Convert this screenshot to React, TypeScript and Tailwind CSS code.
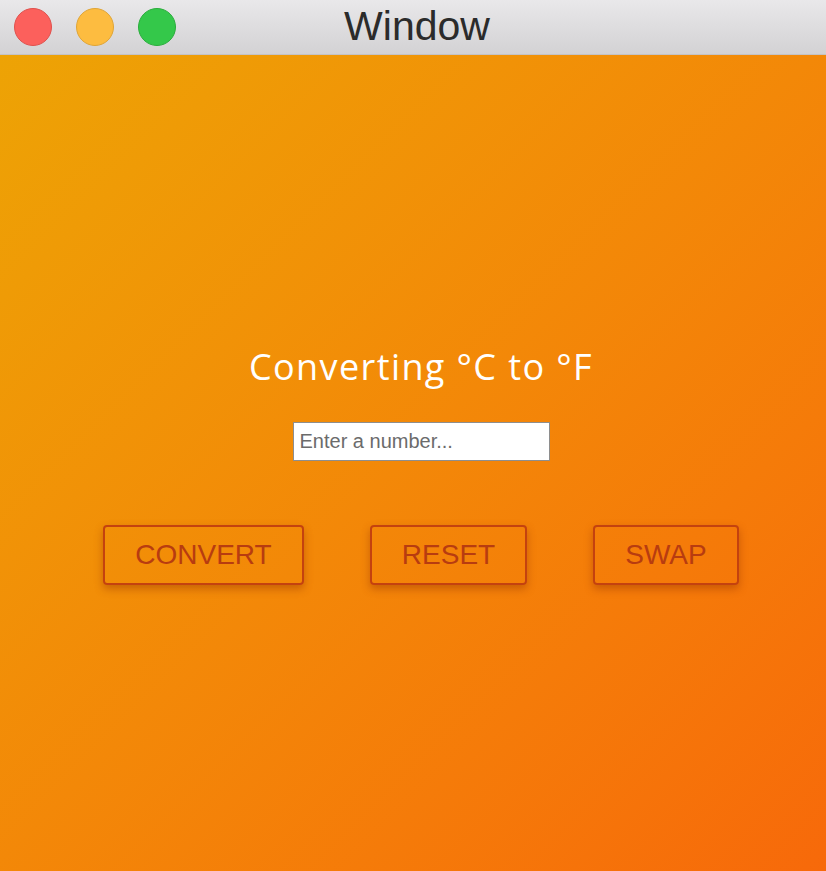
export default function App() {
  return (
    <div className="w-[826px] h-[871px] flex flex-col overflow-hidden">
      {/* title bar */}
      <div className="relative h-[55px] shrink-0 flex items-center bg-gradient-to-b from-[#e9e8ea] to-[#d3d2d4] border-b border-[#c4c3c5]">
        <div className="flex gap-[24px] pl-[14px]">
          <span className="w-[38px] h-[38px] rounded-full bg-[#fc605c] border border-[#e0504c]" />
          <span className="w-[38px] h-[38px] rounded-full bg-[#fdbc40] border border-[#e0a535]" />
          <span className="w-[38px] h-[38px] rounded-full bg-[#34c84a] border border-[#2aad3c]" />
        </div>
        <div className="absolute inset-0 flex items-center justify-center pl-[8px] text-[41px] text-[#2b2b2b] font-['Liberation_Sans',sans-serif]">
          Window
        </div>
      </div>

      {/* body */}
      <div className="flex-1 flex flex-col items-center pl-[16px] bg-gradient-to-br from-[#eda305] to-[#f7690a]">
        <h1 className="mt-[290px] text-[36px] leading-[44px] text-white font-['Open_Sans',sans-serif] tracking-[1.4px]">
          Converting °C to °F
        </h1>
        <input
          type="text"
          placeholder="Enter a number..."
          className="mt-[33px] w-[257px] h-[39px] bg-white border border-[#8e8e8e] px-[6px] text-[20px] text-[#333] placeholder:text-[#6b6b6b] font-['Liberation_Sans',sans-serif] outline-none"
        />
        <div className="mt-[64px] w-full flex justify-center gap-[66px]">
          {[
            ['CONVERT', 'w-[201px]'],
            ['RESET', 'w-[157px]'],
            ['SWAP', 'w-[146px]'],
          ].map(([label, w]) => (
            <button
              key={label}
              className={`${w} h-[60px] rounded-[4px] border-2 border-[#c4420f] text-[#b83c10] text-[28px] font-['Liberation_Sans',sans-serif] shadow-[0_4px_8px_rgba(150,50,0,0.45)]`}
            >
              {label}
            </button>
          ))}
        </div>
      </div>
    </div>
  );
}
